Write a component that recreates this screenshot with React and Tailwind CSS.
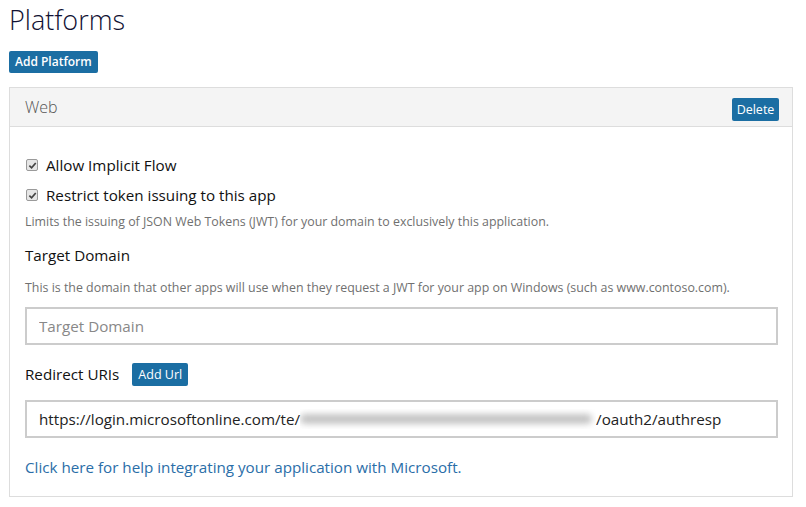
export default function App() {
  const Check = () => (
    <span className="inline-flex h-[12px] w-[12px] shrink-0 items-center justify-center rounded-[2px] border border-[#9a9a9a] bg-[#e6e6e6]">
      <svg width="9" height="9" viewBox="0 0 10 10">
        <path d="M1.5 5.2 L4 7.6 L8.6 2.2" fill="none" stroke="#444" strokeWidth="1.9" />
      </svg>
    </span>
  );
  return (
    <div className="min-h-[507px] w-[806px] bg-white pl-[9px] pr-[13px] font-['Open_Sans',sans-serif] text-black">
      <h1 className="pt-[1px] text-[27px] leading-[38px] font-light text-[#111133]">Platforms</h1>
      <button className="mt-[12px] h-[22px] rounded-[2px] bg-[#1b6ea3] px-[6px] text-[12px] font-semibold leading-[22px] text-white">
        Add Platform
      </button>
      <div className="mt-[14px] border border-[#dddddd]">
        <div className="flex h-[39px] items-center justify-between border-b border-[#dddddd] bg-[#f4f4f4] pl-[15px] pr-[13px]">
          <span className="text-[16px] font-light text-[#555]">Web</span>
          <button className="mt-[4px] h-[23px] w-[47px] rounded-[2px] bg-[#1b6ea3] text-[12.5px] leading-[23px] text-white">
            Delete
          </button>
        </div>
        <div className="pl-[15px] pr-[14px] pt-[25px] pb-[18px]">
          <label className="flex h-[26px] items-center gap-[8px] pl-[1px]">
            <Check />
            <span className="text-[15.2px] text-[#111]">Allow Implicit Flow</span>
          </label>
          <label className="mt-[4px] flex h-[26px] items-center gap-[8px] pl-[1px]">
            <Check />
            <span className="text-[15.2px] text-[#111]">Restrict token issuing to this app</span>
          </label>
          <p className="mt-[5px] text-[12.4px] leading-[18px] text-[#707070]">
            Limits the issuing of JSON Web Tokens (JWT) for your domain to exclusively this application.
          </p>
          <p className="mt-[12px] text-[15.2px] leading-[24px] text-[#111]">Target Domain</p>
          <p className="mt-[12px] text-[12.4px] leading-[18px] text-[#707070]">
            This is the domain that other apps will use when they request a JWT for your app on Windows (such as www.contoso.com).
          </p>
          <input
            className="mt-[10px] block h-[38px] w-full border-2 border-[#cccccc] px-[12px] text-[15.2px] text-[#111] outline-none placeholder:text-[#888]"
            placeholder="Target Domain"
          />
          <div className="mt-[18px] flex items-center gap-[13px]">
            <span className="text-[15.2px] text-[#111]">Redirect URIs</span>
            <button className="h-[23px] rounded-[2px] bg-[#1b6ea3] px-[6px] text-[12.5px] leading-[23px] text-white">
              Add Url
            </button>
          </div>
          <div className="mt-[14px] flex h-[38px] w-full items-center border-2 border-[#cccccc] px-[12px] text-[15.2px] text-[#222]">
            <span>https://login.microsoftonline.com/te/</span>
            <span className="relative h-[20px] w-[296px] overflow-hidden">
              <span className="absolute left-[0px] top-[5px] h-[10px] w-[292px] rounded-full bg-[#c4c4c4] blur-[3px]" />
            </span>
            <span>/oauth2/authresp</span>
          </div>
          <a className="mt-[18px] block text-[15.2px] leading-[22px] text-[#2a6ea8]" href="#">
            Click here for help integrating your application with Microsoft.
          </a>
        </div>
      </div>
    </div>
  );
}
